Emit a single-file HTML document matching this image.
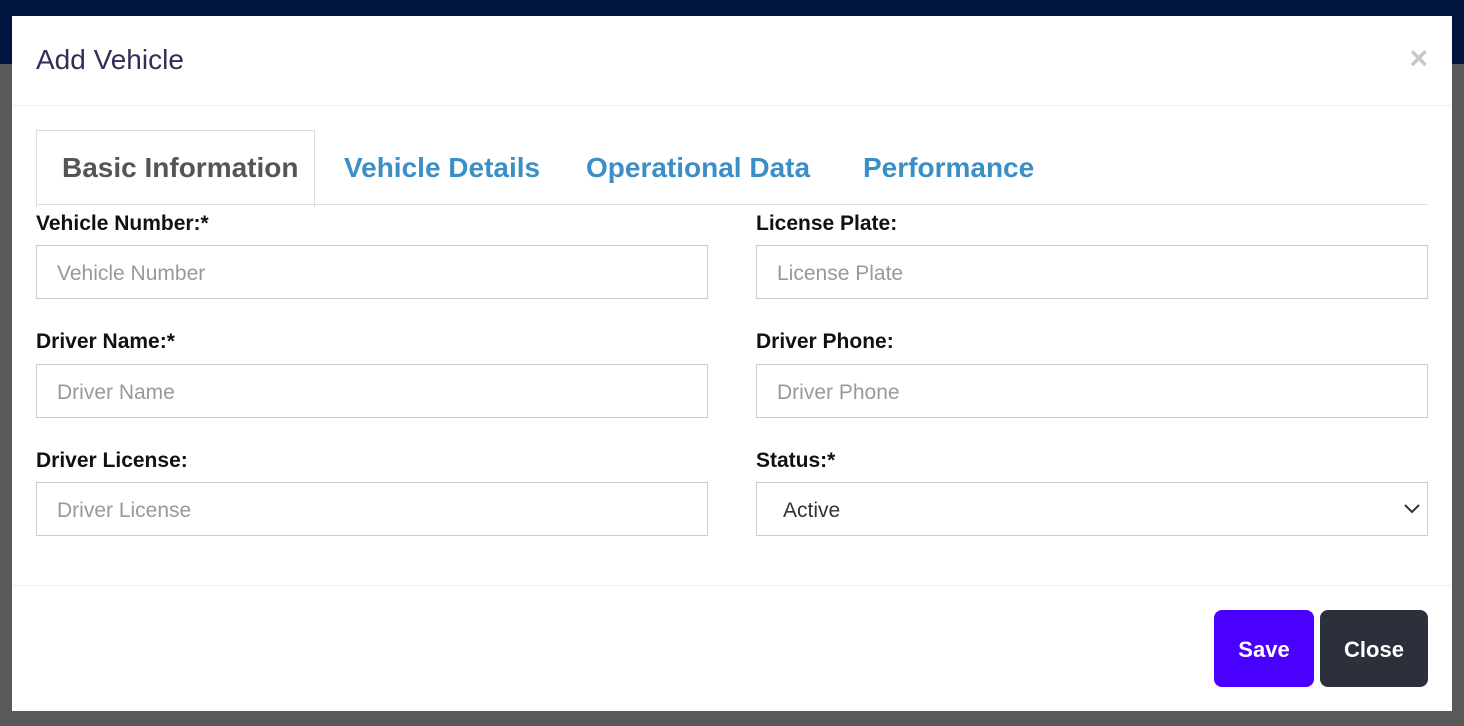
<!DOCTYPE html><html><head><style>
body{margin:0;width:1464px;height:726px;overflow:hidden;background:#595959;font-family:"Liberation Sans",sans-serif;position:relative}
.top{position:absolute;left:0;top:0;width:1464px;height:64px;background:#00163f}
.m{position:absolute;left:12px;top:16px;width:1440px;height:695px;background:#fff}
.t{position:absolute;left:24px;top:28px;font-size:28px;color:#2f2f5a}
.x{position:absolute;right:24px;top:24px;font-size:32px;color:#c8c8c8;font-weight:bold}
.hr{position:absolute;left:0;width:1440px;height:1px;background:#eee}
.tab{position:absolute;font-size:28px;color:#3b8fc6;font-weight:bold}
.ab{position:absolute;left:24px;top:114px;width:277px;height:76px;border:1px solid #ddd;border-bottom:none;background:#fff}
.tl{position:absolute;left:24px;top:188px;width:1392px;height:1px;background:#ddd}
.lb{position:absolute;font-size:21px;font-weight:bold;color:#111}
.in{position:absolute;width:670px;height:52px;border:1px solid #ccc;box-sizing:content-box;font-size:21px;color:#999;line-height:56px}
.in span{margin-left:20px}
.btn{position:absolute;top:594px;height:77px;border-radius:8px;color:#fff;font-weight:bold;font-size:22px;text-align:center;line-height:80px}
</style></head><body>
<div class="top"></div>
<div class="m">
<div class="t">Add Vehicle</div><div class="x">×</div>
<div class="hr" style="top:89px"></div>
<div class="ab"></div><div class="tl"></div>
<div class="tab" style="left:50px;top:136px;color:#555">Basic Information</div>
<div class="tab" style="left:332px;top:136px">Vehicle Details</div>
<div class="tab" style="left:574px;top:136px">Operational Data</div>
<div class="tab" style="left:851px;top:136px">Performance</div>
<div class="lb" style="left:24px;top:196px">Vehicle Number:*</div>
<div class="lb" style="left:744px;top:196px">License Plate:</div>
<div class="in" style="left:24px;top:229px"><span>Vehicle Number</span></div>
<div class="in" style="left:744px;top:229px"><span>License Plate</span></div>
<div class="lb" style="left:24px;top:314px">Driver Name:*</div>
<div class="lb" style="left:744px;top:314px">Driver Phone:</div>
<div class="in" style="left:24px;top:348px"><span>Driver Name</span></div>
<div class="in" style="left:744px;top:348px"><span>Driver Phone</span></div>
<div class="lb" style="left:24px;top:433px">Driver License:</div>
<div class="lb" style="left:744px;top:433px">Status:*</div>
<div class="in" style="left:24px;top:466px"><span>Driver License</span></div>
<div class="in" style="left:744px;top:466px;color:#333"><span style="margin-left:26px">Active</span>
<svg style="position:absolute;right:6px;top:20px" width="18" height="12" viewBox="0 0 18 12"><path d="M2 2l7 7 7-7" stroke="#333" stroke-width="2" fill="none"/></svg></div>
<div class="hr" style="top:569px"></div>
<div class="btn" style="left:1202px;width:100px;background:#4a00ff">Save</div>
<div class="btn" style="left:1308px;width:108px;background:#2b303b">Close</div>
</div>
</body></html>
